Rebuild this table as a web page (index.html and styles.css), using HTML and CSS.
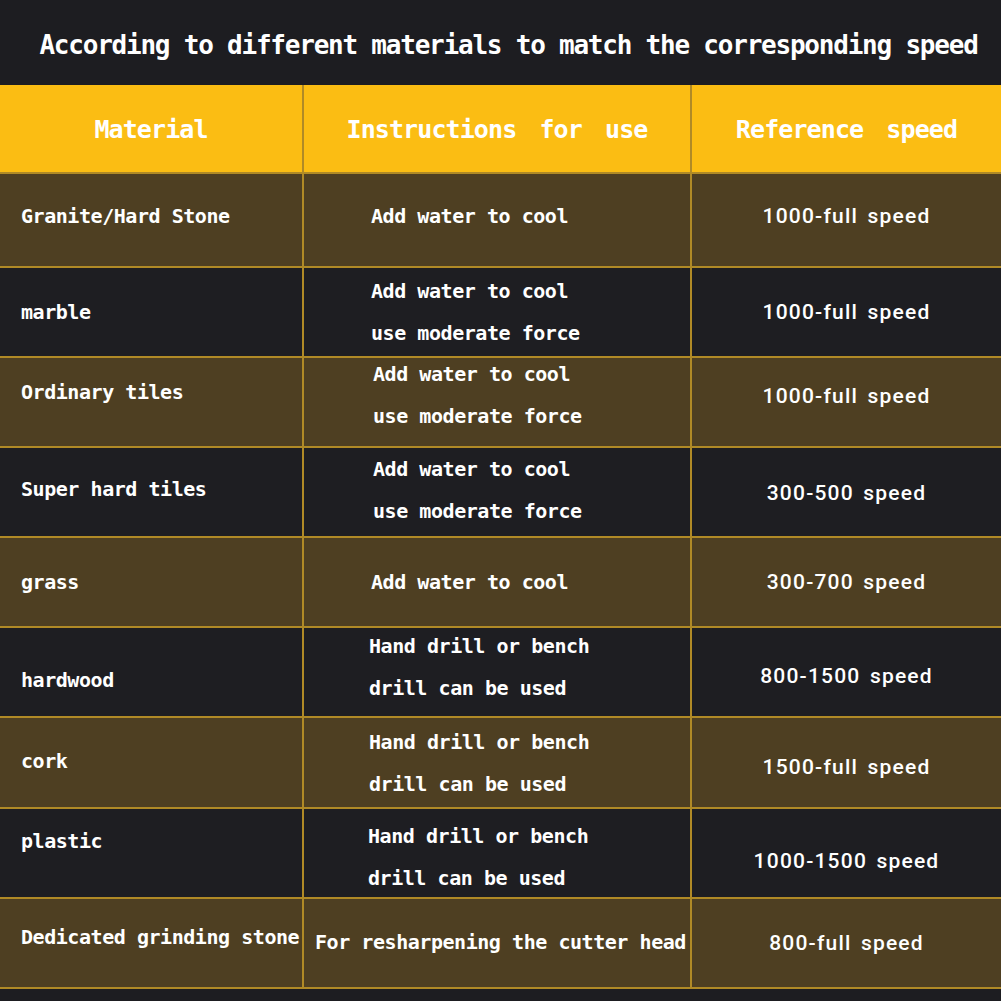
FILE: index.html
```html
<!DOCTYPE html>
<html lang="en">
<head>
<meta charset="utf-8">
<title>Material speed table</title>
<link rel="stylesheet" href="styles.css">
</head>
<body>
<div class="page">
  <h1 class="title">According to different materials to match the corresponding speed</h1>
  <div class="table">
    <div class="cell head">Material</div>
    <div class="cell head">Instructions for use</div>
    <div class="cell head">Reference speed</div>

    <div class="cell mat odd up4">Granite/Hard Stone</div>
    <div class="cell ins odd up4">Add water to cool</div>
    <div class="cell spd odd up4">1000-full speed</div>

    <div class="cell mat even">marble</div>
    <div class="cell ins even"><span>Add water to cool</span><span>use moderate force</span></div>
    <div class="cell spd even">1000-full speed</div>

    <div class="cell mat odd up10">Ordinary tiles</div>
    <div class="cell ins odd up7 pl2"><span>Add water to cool</span><span>use moderate force</span></div>
    <div class="cell spd odd up6">1000-full speed</div>

    <div class="cell mat even up3">Super hard tiles</div>
    <div class="cell ins even pl2 up2"><span>Add water to cool</span><span>use moderate force</span></div>
    <div class="cell spd even dn1">300-500 speed</div>

    <div class="cell mat odd">grass</div>
    <div class="cell ins odd">Add water to cool</div>
    <div class="cell spd odd">300-700 speed</div>

    <div class="cell mat even dn8">hardwood</div>
    <div class="cell ins even up5 pl-2"><span>Hand drill or bench</span><span>drill can be used</span></div>
    <div class="cell spd even dn4">800-1500 speed</div>

    <div class="cell mat odd up2">cork</div>
    <div class="cell ins odd pl-2"><span>Hand drill or bench</span><span>drill can be used</span></div>
    <div class="cell spd odd dn4">1500-full speed</div>

    <div class="cell mat even up12">plastic</div>
    <div class="cell ins even dn4 pl-3"><span>Hand drill or bench</span><span>drill can be used</span></div>
    <div class="cell spd even dn8">1000-1500 speed</div>

    <div class="cell mat odd up6">Dedicated grinding stone</div>
    <div class="cell ins odd wide up1">For resharpening the cutter head</div>
    <div class="cell spd odd">800-full speed</div>
  </div>
</div>
</body>
</html>
```

FILE: styles.css
```css
html, body {
  margin: 0;
  padding: 0;
  background: #1d1d21;
}

.page {
  width: 1001px;
  height: 1001px;
  overflow: hidden;
  background: #1d1d21;
  color: #ffffff;
  font-family: "DejaVu Sans Mono", "Liberation Mono", monospace;
  font-weight: bold;
}

.title {
  margin: 0;
  height: 85px;
  display: flex;
  align-items: center;
  justify-content: center;
  padding-left: 16px;
  padding-top: 4px;
  box-sizing: border-box;
  font-size: 26px;
  letter-spacing: -1.22px;
  font-weight: bold;
  white-space: nowrap;
}

.table {
  display: grid;
  grid-template-columns: 302px 386px 1fr;
  grid-template-rows: 87px 92px 88px 88px 88px 88px 88px 89px 88px 88px;
  gap: 2px;
  padding-bottom: 2px;
  background: #b08a26;
}

.cell {
  display: flex;
  flex-direction: column;
  justify-content: center;
  box-sizing: border-box;
  white-space: nowrap;
}

.head {
  background: #fbbd13;
  align-items: center;
  font-size: 25px;
  letter-spacing: -0.9px;
  word-spacing: 9px;
  padding-top: 2px;
}

.odd { background: #4e3f22; }
.even { background: #1e1e22; }

.mat {
  padding-left: 21px;
  font-size: 20px;
  letter-spacing: -0.45px;
}

.ins {
  padding-left: 67px;
  font-size: 20px;
  letter-spacing: -0.45px;
  line-height: 42px;
}

.ins.wide {
  padding-left: 11px;
}

.spd {
  align-items: center;
  padding-left: 0;
  font-family: Roboto, "Liberation Sans", sans-serif;
  font-weight: 500;
  font-size: 21px;
  letter-spacing: 1.2px;
  word-spacing: 3px;
}

.pl2 { padding-left: 69px; }
.pl-2 { padding-left: 65px; }
.pl-3 { padding-left: 64px; }

.up1 { padding-bottom: 2px; }
.up2 { padding-bottom: 4px; }
.up3 { padding-bottom: 6px; }
.up4 { padding-bottom: 8px; }
.up5 { padding-bottom: 10px; }
.up6 { padding-bottom: 12px; }
.up7 { padding-bottom: 14px; }
.up10 { padding-bottom: 20px; }
.up12 { padding-bottom: 24px; }
.dn1 { padding-top: 2px; }
.dn4 { padding-top: 8px; }
.dn8 { padding-top: 16px; }
```
